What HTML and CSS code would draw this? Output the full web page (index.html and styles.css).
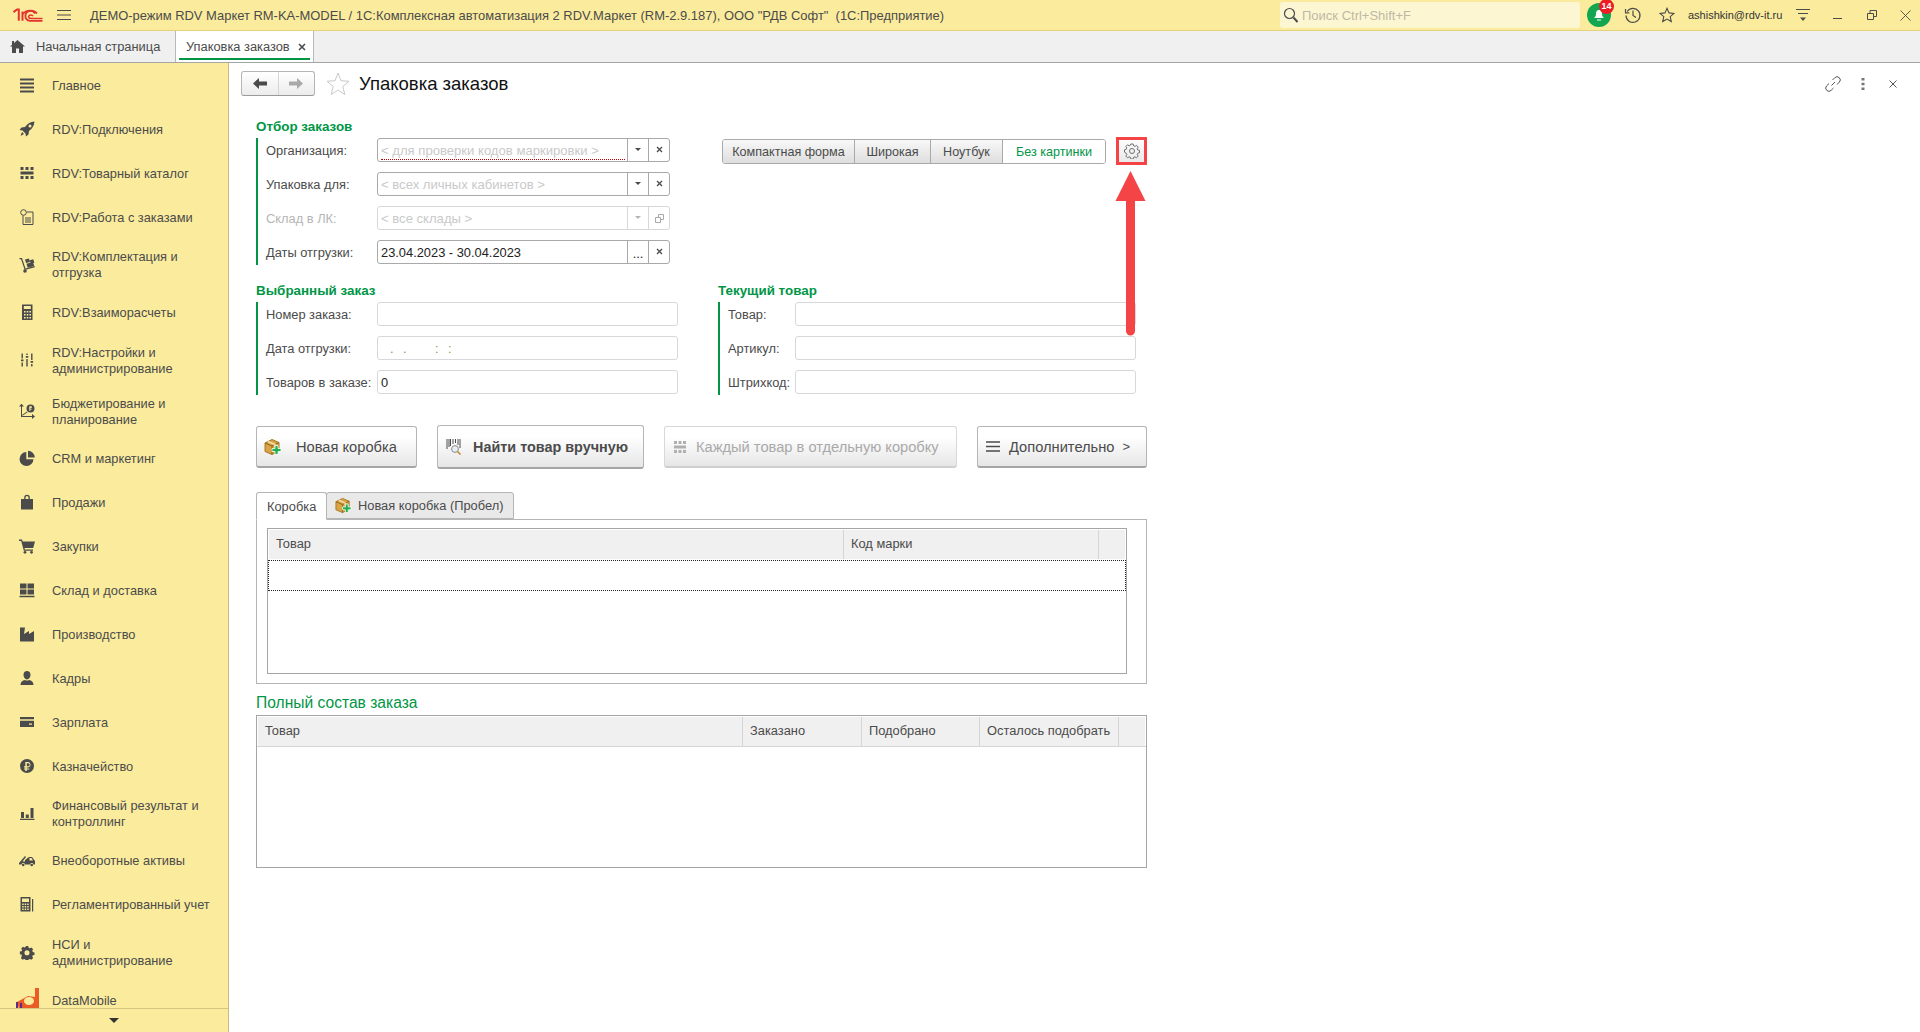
FILE: index.html
```html
<!DOCTYPE html>
<html lang="ru">
<head>
<meta charset="utf-8">
<title>Упаковка заказов</title>
<link rel="stylesheet" href="styles.css">
</head>
<body>
<svg class="defs" width="0" height="0" aria-hidden="true">
  <defs>
    <symbol id="box" viewBox="0 0 18 18">
      <path d="M1 5 8 1.500 15 4.500V13L8 16.500 1 13.500Z" fill="#d9a441" stroke="#a8772a"/>
      <path d="M1 5 8 8 15 4.500M8 8V16.500" fill="none" stroke="#8d6420"/>
      <path d="M4 3.500 11 6.500V9" fill="none" stroke="#f3dfae" stroke-width="1.600"/>
      <path d="M11 7.500h3v3h3v3h-3v3h-3v-3H8v-3h3Z" fill="#22b14c" stroke="#fff" stroke-width=".8"/>
    </symbol>
    <symbol id="grid" viewBox="0 0 14 12">
      <path d="M0 0h3v3H0ZM4.500 0h3v3h-3ZM9 0h3v3H9ZM0 4.500h12v3H0ZM0 9h3v3H0ZM4.500 9h3v3h-3ZM9 9h3v3H9Z" fill="currentColor"/>
    </symbol>
  </defs>
</svg>
<div class="app">
  <header class="titlebar">
    <svg class="logo" width="30" height="14" viewBox="0 0 30 14"><path d="M.500 4.200 4 1.500h1.800V12.800M9.500 12.800V3.500" fill="none" stroke="#e3342f" stroke-width="2"/><path d="M22 5.500A5 4.500 0 0 0 12.500 7.500 5 4.500 0 0 0 17 12.800H29.500" fill="none" stroke="#e3342f" stroke-width="1.800"/><path d="M24 5.500A8 6 0 0 0 10 6" fill="none" stroke="#e3342f" stroke-width="1.600"/><path d="M20 8.200A2.500 2.500 0 0 0 15.500 8.500 2.500 2.500 0 0 0 18 10.500H29.500" fill="none" stroke="#e3342f" stroke-width="1.500"/></svg>
    <svg class="burger" width="14" height="12" viewBox="0 0 14 12"><path d="M0 1.500h14M0 6h14M0 10.500h14" stroke="#4b4b4b" stroke-width="1"/></svg>
    <div class="app-title">ДЕМО-режим RDV Маркет RM-KA-MODEL / 1С:Комплексная автоматизация 2 RDV.Маркет (RM-2.9.187), ООО "РДВ Софт"  (1С:Предприятие)</div>
    <div class="search">
      <svg width="16" height="16" viewBox="0 0 16 16"><circle cx="6.500" cy="6.500" r="5" fill="none" stroke="#4b4b4b" stroke-width="1.200"/><path d="m10.500 10.500 4 4.500" stroke="#4b4b4b" stroke-width="2"/></svg>
      <span>Поиск Ctrl+Shift+F</span>
    </div>
    <div class="bell">
      <svg width="14" height="14" viewBox="0 0 14 14"><path d="M7 2c2.500 0 3 2 3 4s1 3 2 4H2c1-1 2-2 2-4s.5-4 3-4Z" fill="#fff"/><path d="M5 11.500h4v1H5Z" fill="#fff"/></svg>
      <span class="badge">14</span>
    </div>
    <svg class="t-history" width="18" height="18" viewBox="0 0 18 18"><path d="M3.200 5.500A7 7 0 1 1 2 9.500" fill="none" stroke="#4b4b4b" stroke-width="1.200"/><path d="M1.500 3v3.800h3.800" fill="none" stroke="#4b4b4b" stroke-width="1.200"/><path d="M9 4.500V9.500l3 2" fill="none" stroke="#4b4b4b" stroke-width="1.200"/></svg>
    <svg class="t-star" width="16" height="16" viewBox="0 0 16 16"><path d="m8 1.300 2 4.600 5 .5-3.800 3.300 1.100 4.900L8 12.100l-4.300 2.500 1.100-4.900L1 6.400l5-.5Z" fill="none" stroke="#4b4b4b" stroke-width="1.100"/></svg>
    <div class="user">ashishkin@rdv-it.ru</div>
    <svg class="t-menu" width="14" height="14" viewBox="0 0 14 14"><path d="M0 1.500h14M2 5.500h10" stroke="#4b4b4b"/><path d="M4 9.500h6l-3 3.500Z" fill="#4b4b4b"/></svg>
    <svg class="t-min" width="10" height="10" viewBox="0 0 10 10"><path d="M0 8.500h9" stroke="#4b4b4b"/></svg>
    <svg class="t-rest" width="10" height="10" viewBox="0 0 10 10"><path d="M.5 3.500h6v6h-6ZM3 3.500V.5h6.500v6h-3" fill="none" stroke="#4b4b4b"/></svg>
    <svg class="t-close" width="11" height="11" viewBox="0 0 11 11"><path d="m.5.500 10 10M10.500.5l-10 10" stroke="#4b4b4b" stroke-width=".9"/></svg>
  </header>

  <nav class="tabbar">
    <div class="tab tab-home">
      <svg width="15" height="13" viewBox="0 0 15 13"><path d="M7.500 0 15 6.500h-2V13H9V8.500H6V13H2V6.500H0L2 4.800V1h2v2.100Z" fill="#4b4b4b"/></svg>
      <span>Начальная страница</span>
    </div>
    <div class="tab tab-active">
      <span>Упаковка заказов</span>
      <svg width="8" height="8" viewBox="0 0 8 8"><path d="m1 1 6 6M7 1 1 7" stroke="#4b4b4b" stroke-width="1.600"/></svg>
    </div>
  </nav>

  <div class="body">
    <aside class="side">
      <div class="side-list">
        <a class="nav"><svg viewBox="0 0 16 16"><path d="M1 1.500h14v2H1ZM1 5.500h14v2H1ZM1 9.500h14v2H1ZM1 13.500h14v2H1Z"/></svg><span>Главное</span></a>
        <a class="nav"><svg viewBox="0 0 16 16"><path d="M15.500.500c-4 .3-7 2-9.500 5.500l-3.500.5L.500 9l3 .5 3 3 .5 3 2.500-2 .5-3.500c3.500-2.500 5.200-5.500 5.500-9.500ZM11 3.500a1.500 1.500 0 1 1 0 3 1.500 1.500 0 0 1 0-3ZM3 11l2 2-3.500 2Z"/></svg><span>RDV:Подключения</span></a>
        <a class="nav"><svg viewBox="0 0 16 16"><path d="M1.500 2h3v3h-3ZM6.500 2h3v3h-3ZM11.500 2h3v3h-3ZM1.500 6.500h13v3h-13ZM1.500 11h3v3h-3ZM6.500 11h3v3h-3ZM11.500 11h3v3h-3Z"/></svg><span>RDV:Товарный каталог</span></a>
        <a class="nav"><svg viewBox="0 0 16 16" class="line"><circle cx="4.500" cy="3.500" r="2.800"/><path d="M7.500 3H14v12.500H4V6.500M6 9h6M6 11h6M6 13h6"/></svg><span>RDV:Работа с заказами</span></a>
        <a class="nav h51"><svg viewBox="0 0 16 16"><path d="M.500 1h2.500l3.500 10.500 9-2.500.4 1.200-10.200 2.900-3.600-10.900H.500Z"/><circle cx="6" cy="14" r="1.800"/><path d="m6 2.500 4-1 1 3.500-4 1ZM10.800 3.200l3.500-1 1 3.600-3.500 1ZM7.500 6.800l6.500-1.800 1.200 4-6.500 1.800Z"/></svg><span>RDV:Комплектация и<br>отгрузка</span></a>
        <a class="nav"><svg viewBox="0 0 16 16"><path fill-rule="evenodd" d="M3 .500h10.500V16H3ZM4.800 2v3h7V2ZM5 7v1.600h1.600V7Zm2.700 0v1.600h1.600V7Zm2.700 0v1.600H12V7ZM5 10v1.600h1.600V10Zm2.700 0v1.600h1.600V10Zm2.700 0v1.600H12V10ZM5 13v1.600h1.600V13Zm2.700 0v1.600h1.600V13Zm2.700 0v1.600H12V13Z"/></svg><span>RDV:Взаиморасчеты</span></a>
        <a class="nav h52"><svg viewBox="0 0 16 16"><path d="M2.500 1.500h1.400v5H2.500ZM2 7.500h2.500v1.800H2ZM2.500 10.500h1.400v4H2.500ZM7.300 1.500h1.400v1.500H7.300ZM6.800 4h2.500v1.800H6.800ZM7.300 7h1.400v7.500H7.300ZM12.100 1.500h1.400v6.500h-1.400ZM11.600 9h2.500v1.800h-2.500ZM12.100 12h1.400v2.500h-1.400Z"/></svg><span>RDV:Настройки и<br>администрирование</span></a>
        <a class="nav h50"><svg viewBox="0 0 16 16"><path d="M2 2.800h1V13h12v1H2ZM2.500.800 5 3.500H0ZM16 13.500 13 16v-5Z"/><path d="m3 12 5-3.500.5.800-5 3.500Z"/><path fill-rule="evenodd" d="M11.500 1.500a4 4 0 1 1 0 8 4 4 0 0 1 0-8ZM10.300 3.200v4.500h1.100V6.500h1.300v-.8h-1.300V5h1a1 1 0 0 0 0-1.800Z"/></svg><span>Бюджетирование и<br>планирование</span></a>
        <a class="nav"><svg viewBox="0 0 16 16"><path d="M7.300 2A7 7 0 1 0 14.500 9.200H7.300ZM9 .800V7.500h6.800A7 7 0 0 0 9 .800Z"/></svg><span>CRM и маркетинг</span></a>
        <a class="nav"><svg viewBox="0 0 16 16"><path fill-rule="evenodd" d="M2 5h3.200V3.500a2.800 2.800 0 0 1 5.600 0V5H14v10.500H2ZM6.500 5h3V3.500a1.500 1.500 0 0 0-3 0Z"/></svg><span>Продажи</span></a>
        <a class="nav"><svg viewBox="0 0 16 16"><path d="M0 1.500h3l.7 2H16l-1.800 6.500H5.500l.4 1.500H14v1.300H4.800L2.200 3H0Z"/><circle cx="6" cy="14.300" r="1.400"/><circle cx="12.500" cy="14.300" r="1.400"/></svg><span>Закупки</span></a>
        <a class="nav"><svg viewBox="0 0 16 16"><path d="M1 1.500h6.500v5H1ZM8.500 1.500h6.500v5H8.500ZM1 7.500h6.500v5H1ZM8.500 7.500h6.500v5H8.500ZM.5 13.800h15v1.400H.5Z"/></svg><span>Склад и доставка</span></a>
        <a class="nav"><svg viewBox="0 0 16 16"><path d="M1 15.500V1.500h5L5 8l5-3v3l5-3v10.500Z"/></svg><span>Производство</span></a>
        <a class="nav"><svg viewBox="0 0 16 16"><path d="M8 1c2.200 0 3.500 1.500 3.500 3.800S10 9.500 8 9.500 4.500 7 4.500 4.800 5.800 1 8 1ZM1.500 15c0-3 2-4.500 4.500-5 .8.800 3.200.8 4 0 2.500.5 4.500 2 4.500 5Z"/></svg><span>Кадры</span></a>
        <a class="nav"><svg viewBox="0 0 16 16"><path d="M1 3h14v2.200H1ZM1 6.800h14V13H1ZM10 9.500v1.200h3V9.500Z" fill-rule="evenodd"/></svg><span>Зарплата</span></a>
        <a class="nav"><svg viewBox="0 0 16 16"><path fill-rule="evenodd" d="M8 1a7 7 0 1 1 0 14A7 7 0 0 1 8 1ZM6.300 4v4.200H5v1.300h1.300v.9H5v1.200h1.300V13h1.500v-1.400h2.500v-1.200H7.800v-.9h1.500a2.800 2.800 0 0 0 0-5.500ZM7.800 5.200h1.400a1.500 1.500 0 0 1 0 3H7.800Z"/></svg><span>Казначейство</span></a>
        <a class="nav h50"><svg viewBox="0 0 16 16"><path d="M2 7h3v6H2ZM6.800 9.500h3V13h-3ZM11.500 3h3v10h-3ZM1 13.800h14.500v1.200H1Z"/></svg><span>Финансовый результат и<br>контроллинг</span></a>
        <a class="nav"><svg viewBox="0 0 16 16"><path fill-rule="evenodd" d="M0 11 6 4l1 1-3.500 4.500H6V8l4-3h3l3 4v3.500h-1.500a1.800 1.800 0 0 0-3.500 0H6a1.800 1.800 0 0 0-3.500 0H0ZM10.500 6v2.500h3.500L12.500 6Z"/><circle cx="4.200" cy="13" r="1.300"/><circle cx="12.700" cy="13" r="1.300"/></svg><span>Внеоборотные активы</span></a>
        <a class="nav"><svg viewBox="0 0 16 16"><path fill-rule="evenodd" d="M1.500 1h10v14.500h-10ZM3 2.500v3.500h7V2.500ZM3.200 7.500v1.500h1.500V7.500Zm2.500 0v1.500h1.500V7.500Zm2.500 0v1.500h1.500V7.500ZM3.200 10v1.500h1.500V10Zm2.500 0v1.500h1.500V10Zm2.500 0v1.500h1.500V10ZM3.200 12.500V14h1.500v-1.500Zm2.500 0V14h1.500v-1.500Zm2.500 0V14h1.500v-1.500ZM13 3h1.200v12.500H13Z"/></svg><span>Регламентированный учет</span></a>
        <a class="nav h52"><svg viewBox="0 0 16 16"><path fill-rule="evenodd" d="M6.500 1h3l.4 2 1.500.7 1.800-1.100 2 2.100-1 1.800.6 1.500 2 .5v3l-2 .4-.6 1.500 1 1.800-2 2-1.800-1-1.500.6-.4 2h-3l-.4-2-1.500-.6-1.800 1-2-2 1-1.800L1.600 11l-2-.5v-3l2-.4.6-1.500-1-1.800 2-2.100 1.800 1.100 1.500-.7ZM8 5.800a3 3 0 1 0 0 6 3 3 0 0 0 0-6Z" transform="translate(1.200 1.200) scale(.85)"/></svg><span>НСИ и<br>администрирование</span></a>
        <a class="nav last"><svg class="dm" viewBox="0 0 24 24"><path d="M19 0h4v21H3L1 14l11-6 7 1Z" fill="#ea5b25"/><path d="M8 13a5 4 0 0 1 10 0 5 4 0 0 1-10 0Z" fill="#fbec9d"/><path d="M0 14h2v8H0ZM4 15h2v7H4Z" fill="#5b2d86"/></svg><span>DataMobile</span></a>
      </div>
      <div class="side-foot"><i class="tri"></i></div>
    </aside>

    <main class="main">
      <div class="head">
        <div class="history">
          <button class="hbtn"><svg width="14" height="11" viewBox="0 0 14 11"><path d="M0 5.500 6 0v3.500h8v4H6V11Z" fill="#4b4b4b"/></svg></button>
          <button class="hbtn"><svg width="14" height="11" viewBox="0 0 14 11"><path d="M14 5.500 8 0v3.500H0v4h8V11Z" fill="#a9a9a9"/></svg></button>
        </div>
        <svg class="fav" width="24" height="23" viewBox="0 0 24 23"><path d="m12 1 3 7.700 8 .6-6.200 5.200 2 8L12 18l-6.800 4.500 2-8L1 9.300l8-.6Z" fill="#fff" stroke="#c9c9c9"/></svg>
        <h1>Упаковка заказов</h1>
        <div class="head-tools">
          <svg class="tool-link" width="16" height="16" viewBox="0 0 16 16"><path d="M6.500 9.500 10 6M7.500 4 9.800 1.700a2.800 2.800 0 0 1 4.500 4.500L12 8.500M8.500 12l-2.300 2.300a2.800 2.800 0 0 1-4.500-4.500L4 7.500" fill="none" stroke="#555"/></svg>
          <svg width="4" height="12" viewBox="0 0 4 12"><path d="M.500 0h3v2.500h-3ZM.500 4.700h3v2.500h-3ZM.500 9.500h3V12h-3Z" fill="#777"/></svg>
          <svg width="8" height="8" viewBox="0 0 8 8"><path d="m.500.500 7 7M7.500.500l-7 7" stroke="#555"/></svg>
        </div>
      </div>

      <div class="form">
        <div class="row-top">
          <section class="group g-filter">
            <h2>Отбор заказов</h2>
            <div class="rows">
              <div class="frow"><label>Организация:</label>
                <div class="field">
                  <div class="fin"><span class="mark">&lt; для проверки кодов маркировки &gt;</span></div>
                  <div class="fbtn"><i class="tri-s"></i></div>
                  <div class="fbtn"><svg class="x" viewBox="0 0 7 7"><path d="m1 1 5 5M6 1 1 6"/></svg></div>
                </div>
              </div>
              <div class="frow"><label>Упаковка для:</label>
                <div class="field">
                  <div class="fin"><span class="ph">&lt; всех личных кабинетов &gt;</span></div>
                  <div class="fbtn"><i class="tri-s"></i></div>
                  <div class="fbtn"><svg class="x" viewBox="0 0 7 7"><path d="m1 1 5 5M6 1 1 6"/></svg></div>
                </div>
              </div>
              <div class="frow off"><label>Склад в ЛК:</label>
                <div class="field">
                  <div class="fin"><span class="ph">&lt; все склады &gt;</span></div>
                  <div class="fbtn"><i class="tri-s"></i></div>
                  <div class="fbtn"><svg width="9" height="9" viewBox="0 0 9 9"><path d="M3.500 3V.5h5v5H6M.5 3.500h5v5h-5Z" fill="none" stroke="#a9a9a9"/></svg></div>
                </div>
              </div>
              <div class="frow"><label>Даты отгрузки:</label>
                <div class="field">
                  <div class="fin"><span>23.04.2023 - 30.04.2023</span></div>
                  <div class="fbtn dots">...</div>
                  <div class="fbtn"><svg class="x" viewBox="0 0 7 7"><path d="m1 1 5 5M6 1 1 6"/></svg></div>
                </div>
              </div>
            </div>
          </section>
          <div class="modes-wrap">
            <div class="modes">
              <button class="mode m1">Компактная форма</button>
              <button class="mode m2">Широкая</button>
              <button class="mode m3">Ноутбук</button>
              <button class="mode m4 on">Без картинки</button>
            </div>
            <button class="gear">
              <svg width="16" height="16" viewBox="0 0 16 16"><path d="M6.800 1h2.400l.4 1.800 1.300.6 1.600-1 1.700 1.700-1 1.600.6 1.300 1.700.4v2.400l-1.700.4-.6 1.300 1 1.600-1.700 1.700-1.600-1-1.300.6-.4 1.700H6.800l-.4-1.700-1.300-.6-1.600 1-1.700-1.700 1-1.600-.6-1.300L.5 9.200V6.800l1.700-.4.6-1.300-1-1.600 1.700-1.700 1.600 1 1.300-.6Z" fill="none" stroke="#6e6e6e"/><circle cx="8" cy="8" r="2.500" fill="none" stroke="#6e6e6e"/></svg>
            </button>
          </div>
        </div>

        <div class="row-mid">
          <section class="group g-order">
            <h2>Выбранный заказ</h2>
            <div class="rows">
              <div class="frow"><label>Номер заказа:</label><div class="field plain"></div></div>
              <div class="frow"><label>Дата отгрузки:</label><div class="field plain"><div class="fin"><span class="datemask">. .   : :</span></div></div></div>
              <div class="frow"><label>Товаров в заказе:</label><div class="field plain"><div class="fin"><span>0</span></div></div></div>
            </div>
          </section>
          <section class="group g-item">
            <h2>Текущий товар</h2>
            <div class="rows">
              <div class="frow"><label>Товар:</label><div class="field plain"></div></div>
              <div class="frow"><label>Артикул:</label><div class="field plain"></div></div>
              <div class="frow"><label>Штрихкод:</label><div class="field plain"></div></div>
            </div>
          </section>
        </div>

        <div class="actions">
          <button class="btn b-new"><svg width="18" height="18"><use href="#box"/></svg><span>Новая коробка</span></button>
          <button class="btn b-find"><svg width="16" height="16" viewBox="0 0 16 16"><path d="M1 0v10M3 0v8M4.500 0v7M7 0v5M9.500 0v4M12 0v6M14 0v9" stroke="#4b4b4b" fill="none"/><circle cx="9" cy="10" r="3.400" fill="#e8eef5" stroke="#8a8a8a"/><path d="m11.500 12.500 3 3" stroke="#c8862f" stroke-width="1.600"/></svg><span>Найти товар вручную</span></button>
          <button class="btn b-each"><svg class="gridi" width="14" height="12"><use href="#grid"/></svg><span>Каждый товар в отдельную коробку</span></button>
          <button class="btn b-more"><svg width="14" height="11" viewBox="0 0 14 11"><path d="M0 1h14M0 5.500h14M0 10h14" stroke="#4b4b4b" stroke-width="1.300"/></svg><span>Дополнительно</span><em>&gt;</em></button>
        </div>

        <div class="ptabs">
          <div class="ptab active">Коробка</div>
          <div class="ptab"><svg width="17" height="17"><use href="#box"/></svg>Новая коробка (Пробел)</div>
        </div>
        <div class="panel">
          <div class="table t1">
            <div class="thead"><div>Товар</div><div>Код марки</div><div></div></div>
            <div class="selrow"></div>
          </div>
        </div>

        <h3>Полный состав заказа</h3>
        <div class="table t2">
          <div class="thead"><div>Товар</div><div>Заказано</div><div>Подобрано</div><div>Осталось подобрать</div><div></div></div>
        </div>

        <svg class="arrow" width="32" height="168" viewBox="0 0 32 168"><path d="M15.500 0 30.500 30H20V160a4.500 4.500 0 0 1-9 0V30H.5Z" fill="#f44446"/></svg>
      </div>
    </main>
  </div>
</div>
</body>
</html>
```

FILE: styles.css
```css
* { box-sizing: border-box; }
html, body { margin: 0; height: 100%; overflow: hidden; background: #fff; }
body { font-family: "Liberation Sans", Arial, sans-serif; font-size: 12.85px; color: #4b4b4b; }
.defs { position: absolute; }
button { font: inherit; color: inherit; padding: 0; margin: 0; }
h1, h2, h3 { margin: 0; font-weight: normal; }

.app { display: flex; flex-direction: column; width: 1920px; height: 1032px; }

.titlebar { height: 31px; flex: none; display: flex; align-items: center; background: #fbec9d; border-bottom: 1px solid #e3d27a; }
.logo { margin-left: 13px; }
.burger { margin-left: 14px; }
.app-title { margin-left: 19px; width: 1190px; white-space: pre; font-size: 12.95px; }
.search { width: 300px; height: 26px; background: #fdf6d3; border-radius: 3px; display: flex; align-items: center; padding-left: 3px; color: #bdb9a4; gap: 3px; font-size: 13px; }
.bell { margin-left: 7px; width: 24px; height: 24px; border-radius: 50%; background: #13a651; position: relative; display: flex; align-items: center; justify-content: center; }
.badge { position: absolute; right: -3px; top: -4px; width: 15px; height: 15px; border-radius: 50%; background: #ed1c24; color: #fff; font-size: 9px; font-weight: bold; line-height: 15px; text-align: center; }
.t-history { margin-left: 13px; }
.t-star { margin-left: 17px; }
.user { margin-left: 13px; font-size: 11px; width: 100px; white-space: nowrap; color: #333; }
.t-menu { margin-left: 8px; }
.t-min { margin-left: 23px; }
.t-rest { margin-left: 24px; }
.t-close { margin-left: 23px; }

.tabbar { height: 32px; flex: none; display: flex; background: #f0f0f0; border-bottom: 1px solid #a5a5a5; }
.tab { display: flex; align-items: center; height: 31px; white-space: nowrap; }
.tab-home { width: 176px; padding-left: 10px; gap: 11px; border-right: 1px solid #b8b8b8; }
.tab-active { width: 138px; padding-left: 10px; gap: 8px; background: #fff; border-right: 1px solid #b8b8b8; position: relative; }
.tab-active::after { content: ""; position: absolute; left: 3px; right: 3px; bottom: 2px; height: 2px; background: #009646; }

.body { flex: 1; display: flex; min-height: 0; }
.side { width: 229px; flex: none; display: flex; flex-direction: column; background: #fbec9d; border-right: 1px solid #c8bc7c; }
.side-list { flex: 1; min-height: 0; overflow: hidden; }
.nav { display: flex; align-items: center; height: 44px; padding-left: 19px; line-height: 16px; color: #4b4b4b; font-size: 12.8px; }
.nav span { margin-top: 1px; }
.nav.h52 { height: 52px; }
.nav.h51 { height: 51px; }
.nav.h50 { height: 50px; }
.nav.last { height: 44px; }
.nav svg { width: 16px; height: 16px; flex: none; fill: #4b4b4b; margin-right: 17px; }
.nav svg.line { fill: none; stroke: #4b4b4b; }
.nav svg.dm { width: 24px; height: 24px; margin: 0 12px 0 -3px; }
.side-foot { height: 24px; flex: none; border-top: 1px solid #d3c681; display: flex; justify-content: center; align-items: center; }
.tri { width: 0; height: 0; border: 5px solid transparent; border-top: 5px solid #333; border-bottom: 0; }

.main { flex: 1; min-width: 0; }
.head { height: 53px; display: flex; align-items: center; padding: 0 23px 12px 12px; }
.history { display: flex; width: 74px; height: 25px; border: 1px solid #b5b5b5; border-bottom-color: #9a9a9a; border-radius: 3px; background: linear-gradient(#fff, #ececec); }
.hbtn { flex: 1; border: 0; background: none; display: flex; align-items: center; justify-content: center; }
.hbtn + .hbtn { border-left: 1px solid #d5d5d5; }
.fav { margin-left: 11px; }
h1 { margin-left: 9px; font-size: 18.5px; color: #111; }
.head-tools { margin-left: auto; display: flex; align-items: center; gap: 24px; }
.tool-link { margin-right: -4px; }

.form { position: relative; width: 891px; margin-left: 27px; }
.group h2 { height: 22px; font-size: 13.4px; font-weight: bold; line-height: 22px; color: #009646; }
.rows { border-left: 2px solid #009646; padding: 0 0 1px 8px; display: flex; flex-direction: column; gap: 10px; }
.frow { display: flex; align-items: center; height: 24px; }
.frow label { white-space: nowrap; flex: none; }
.frow.off label { color: #b5b5b5; }
.field { flex: 1; height: 24px; display: flex; border: 1px solid #a9a9a9; border-radius: 3px; background: #fff; min-width: 0; color: #222; }
.field.plain { border-color: #d8d8d8; }
.frow.off .field { border-color: #d8d8d8; }
.fin { flex: 1; display: flex; align-items: center; padding: 0 2px 0 3px; min-width: 0; white-space: nowrap; }
.ph, .mark { color: #c9c9c9; font-size: 13.1px; }
.mark { display: block; flex: 1; height: 18px; line-height: 17px; border-bottom: 1px dotted #c00000; margin-top: 2px; }
.datemask { color: #a08a4a; padding-left: 9px; white-space: pre; word-spacing: 5.9px; }
.fbtn { width: 21px; flex: none; border-left: 1px solid #a9a9a9; display: flex; align-items: center; justify-content: center; }
.frow.off .fbtn { border-left-color: #d8d8d8; }
.tri-s { width: 0; height: 0; border: 3px solid transparent; border-top: 3px solid #4b4b4b; border-bottom: 0; margin-top: -2px; }
.frow.off .tri-s { border-top-color: #b5b5b5; }
.x { width: 7px; height: 7px; margin-top: -2px; }
.x path { stroke: #4b4b4b; stroke-width: 1.300; fill: none; }
.dots { align-items: flex-end; line-height: 18px; }

.row-top { display: flex; }
.g-filter { width: 414px; }
.g-filter label { width: 111px; }
.modes-wrap { margin: 21px 0 0 52px; height: 28px; display: flex; align-items: center; }
.modes { display: flex; height: 25px; border: 1px solid #a9a9a9; border-radius: 3px; overflow: hidden; }
.mode { border: 0; border-left: 1px solid #a9a9a9; background: linear-gradient(#f8f8f8, #dedede); text-align: center; white-space: nowrap; font-size: 12.6px; padding-top: 1px; }
.mode.m1 { width: 131px; border-left: 0; }
.mode.m2 { width: 76px; }
.mode.m3 { width: 72px; }
.mode.m4 { width: 103px; }
.mode.on { background: #fff; color: #009646; }
.gear { margin-left: 10px; width: 31px; height: 28px; border: 3px solid #f44446; background: linear-gradient(#fdfdfd, #e9e9e9); display: flex; align-items: center; justify-content: center; }

.row-mid { display: flex; margin-top: 15px; }
.g-order { width: 422px; }
.g-order label { width: 111px; }
.g-item { width: 418px; margin-left: 40px; }
.g-item label { width: 67px; }

.actions { display: flex; align-items: center; gap: 20px; height: 44px; margin-top: 30px; }
.btn { display: flex; align-items: center; height: 42px; background: linear-gradient(#fff 25%, #e6e6e6); border: 1px solid #b5b5b5; border-bottom: 2px solid #a5a5a5; border-radius: 3px; white-space: nowrap; font-size: 14.67px; }
.btn svg { flex: none; }
.btn.b-new { width: 161px; padding-left: 7px; gap: 14px; }
.btn.b-find { width: 207px; height: 44px; padding-left: 8px; gap: 11px; font-weight: bold; font-size: 14.4px; }
.btn.b-each { width: 293px; padding-left: 9px; gap: 8px; color: #a9a9a9; border-color: #d8d8d8; border-bottom-color: #cfcfcf; }
.gridi { color: #b0b0b0; }
.btn.b-more { width: 170px; padding-left: 8px; gap: 9px; }
.btn em { font-style: normal; margin-left: -1px; font-size: 13px; }

.ptabs { display: flex; height: 27px; margin-top: 23px; align-items: flex-end; }
.ptab { height: 27px; display: flex; align-items: center; border: 1px solid #b5b5b5; border-radius: 3px 3px 0 0; background: #e9e9e9; white-space: nowrap; gap: 6px; width: 188px; margin-left: -1px; padding: 0 0 0 8px; }
.ptab svg { flex: none; }
.ptab.active { width: 71px; margin-left: 0; background: #fff; border-bottom-color: #fff; padding: 0 10px; position: relative; z-index: 1; height: 28px; margin-bottom: -1px; }
.panel { height: 165px; border: 1px solid #b5b5b5; padding: 8px 19px 9px 10px; }
.table { border: 1px solid #a5a5a5; background: #fff; }
.t1 { height: 146px; }
.thead { display: grid; height: 31px; padding: 1px; background: #fff; }
.thead div { background: #f0f0f0; border-right: 1px solid #d5d5d5; padding-left: 7px; line-height: 28px; box-shadow: 1px 0 0 #fff; height: 29px; white-space: nowrap; }
.thead div:last-child { border-right: 0; }
.t1 .thead { grid-template-columns: 575px 255px 1fr; }
.selrow { height: 31px; border: 1px dotted #222; }
h3 { height: 31px; font-size: 15.6px; line-height: 38px; color: #009646; }
.t2 { height: 153px; }
.t2 .thead { grid-template-columns: 485px 119px 118px 139px 1fr; border-bottom: 1px solid #d5d5d5; }
.arrow { position: absolute; left: 859px; top: 55px; }
```
